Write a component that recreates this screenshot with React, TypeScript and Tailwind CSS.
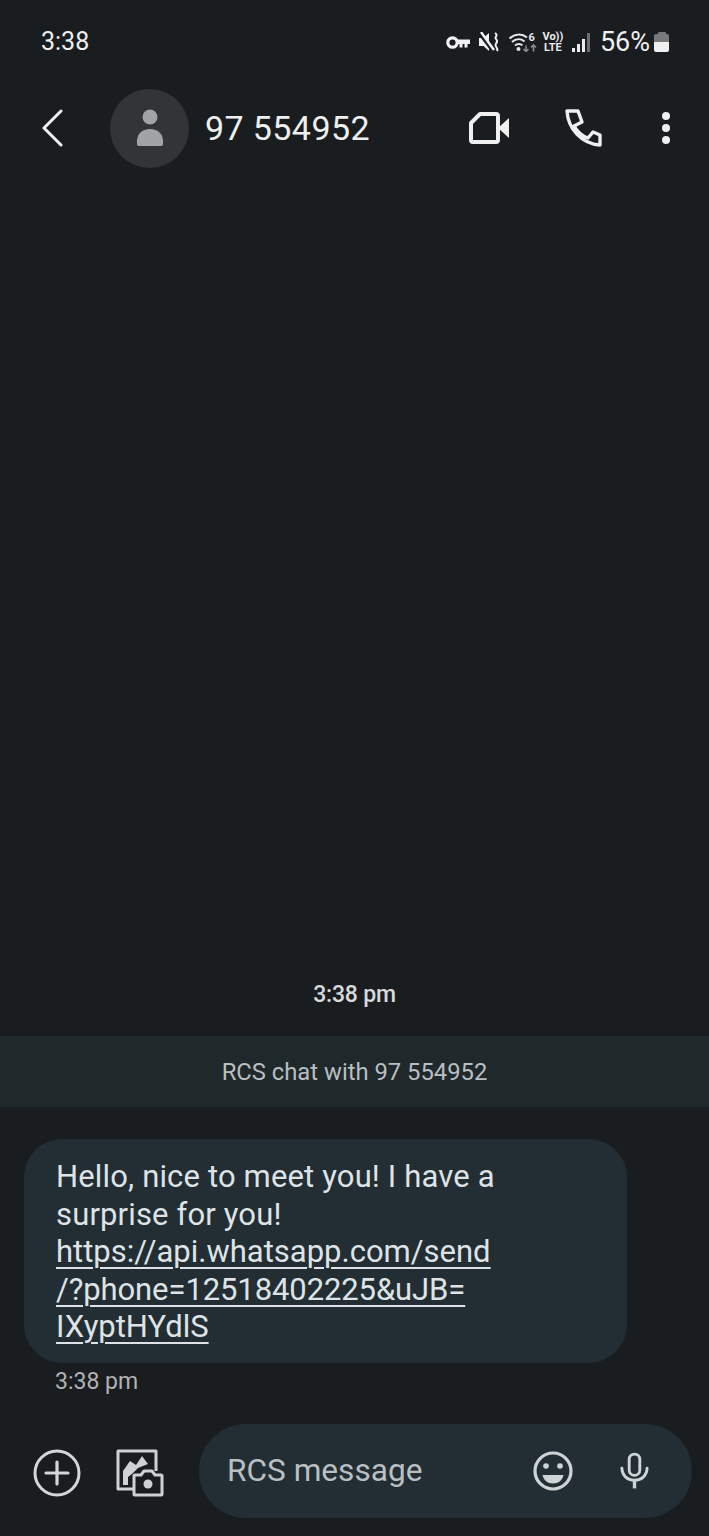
const font = { fontFamily: "Roboto, 'Noto Sans', sans-serif" };

function Key() {
  return (
    <svg width="24" height="13" viewBox="0 0 24 13" fill="none">
      <circle cx="6.5" cy="6.5" r="4.7" stroke="#f2f2f2" strokeWidth="3.2" />
      <path d="M10 3.500h14v4.500h-2.500v3.500h-3V8h-2v3.500h-3V8H10z" fill="#f2f2f2" />
    </svg>
  );
}

function Mute() {
  return (
    <svg width="22" height="20" viewBox="0 0 22 20" fill="none">
      <path d="M0 6h4.500L10 1v18l-5.500-5H0z" fill="#f2f2f2" />
      <path d="M0 1l13 17" stroke="#1a1d20" strokeWidth="3" />
      <path d="M2 0l13 18" stroke="#f2f2f2" strokeWidth="2.400" />
      <path d="M16 1c3 2 1 3 .5 4.500s2.500 2.500 1.500 4.500-2.500 2.500-1 4.500 2 3 1 4.500" stroke="#f2f2f2" strokeWidth="2" />
    </svg>
  );
}

function Wifi() {
  return (
    <svg width="28" height="20" viewBox="0 0 28 20" fill="none">
      <path d="M0.500 6.500C6 1.500 13 1.500 18 5.500M3 10c4-3.500 9-3.500 12.500-.5M6 13.500c2.500-2 5-2 7.500-.2" stroke="#e8e8e8" strokeWidth="2" />
      <circle cx="9.500" cy="17" r="2" fill="#e8e8e8" />
      <path d="M17 13.500v6m-2.500-2.500l2.500 2.500 2.500-2.500" stroke="#8a8a8a" strokeWidth="1.600" />
      <path d="M24.500 19.500v-6.500m-2.500 2.500l2.500-2.500 2.500 2.500" stroke="#8a8a8a" strokeWidth="1.600" />
      <text x="19.500" y="9" fontSize="11" fontWeight="700" fill="#e8e8e8" style={font}>6</text>
    </svg>
  );
}

function Signal() {
  return (
    <div className="flex h-[19px] items-end gap-[2px]">
      <div className="h-[4px] w-[3px] bg-[#ececec]" />
      <div className="h-[8px] w-[3px] bg-[#ececec]" />
      <div className="h-[13px] w-[3px] bg-[#ececec]" />
      <div className="h-[19px] w-[3px] bg-[#6b6e70]" />
    </div>
  );
}

function Battery() {
  return (
    <div className="flex w-[15px] flex-col items-center">
      <div className="h-[2px] w-[8px] rounded-t-[1px] bg-[#77797b]" />
      <div className="flex h-[18px] w-[15px] flex-col overflow-hidden rounded-[2px]">
        <div className="h-[8px] bg-[#77797b]" />
        <div className="flex-1 bg-[#efefef]" />
      </div>
    </div>
  );
}

function Back() {
  return (
    <svg width="24" height="38" viewBox="0 0 24 38" fill="none">
      <path d="M20 2L3 19l17 17" stroke="#f1f1f1" strokeWidth="3" strokeLinecap="round" strokeLinejoin="round" />
    </svg>
  );
}

function Video() {
  return (
    <svg width="42" height="34" viewBox="0 0 42 34" fill="none">
      <path d="M12 3h16a2 2 0 0 1 2 2v24a2 2 0 0 1-2 2H5a2 2 0 0 1-2-2V12z" stroke="#efefef" strokeWidth="4" strokeLinejoin="round" />
      <path d="M30 17l11-10v20z" fill="#efefef" />
    </svg>
  );
}

function Phone() {
  return (
    <svg width="38" height="40" viewBox="0 0 38 40" fill="none">
      <path d="M3 3h11l4 11-8 4c3 5 8 10 14 12l5-6 7 3v10C18 36 4 21 3 3z" stroke="#efefef" strokeWidth="3.400" strokeLinejoin="round" />
    </svg>
  );
}

function Plus() {
  return (
    <svg width="48" height="48" viewBox="0 0 48 48" fill="none">
      <circle cx="24" cy="24" r="22" stroke="#d4d6d7" strokeWidth="3" />
      <path d="M24 13v22M13 24h22" stroke="#d4d6d7" strokeWidth="3.200" strokeLinecap="round" />
    </svg>
  );
}

function Gallery() {
  return (
    <svg width="48" height="48" viewBox="0 0 48 48" fill="none">
      <path d="M17 40H2V2h38v20" stroke="#cfd1d2" strokeWidth="3" strokeLinejoin="round" />
      <path d="M7 36V22l7-10 6 4 6-9 6 8-10 4-6 6-4 3v8z" fill="#cfd1d2" />
      <path d="M19 46a1 1 0 0 1-1-1V27a1 1 0 0 1 1-1h6l3-4h8l3 4h6a1 1 0 0 1 1 1v18a1 1 0 0 1-1 1z" fill="#1a1d20" stroke="#cfd1d2" strokeWidth="3" strokeLinejoin="round" />
      <circle cx="32" cy="35" r="4.500" fill="#cfd1d2" />
    </svg>
  );
}

function Smile() {
  return (
    <svg width="40" height="40" viewBox="0 0 40 40" fill="none">
      <circle cx="20" cy="20" r="18" stroke="#ced3d5" strokeWidth="3.200" />
      <circle cx="13" cy="15" r="2.800" fill="#ced3d5" />
      <circle cx="27" cy="15" r="2.800" fill="#ced3d5" />
      <path d="M9.500 24h21c-1 5-5 8.500-10.500 8.500S10.500 29 9.500 24z" fill="#ced3d5" />
    </svg>
  );
}

function Mic() {
  return (
    <svg width="29" height="38" viewBox="0 0 30 38" fill="none">
      <rect x="9.500" y="1.500" width="11" height="22" rx="5.500" stroke="#ced3d5" strokeWidth="3" />
      <path d="M2 16c0 7.500 5.500 12.500 13 12.500S28 23.500 28 16" stroke="#ced3d5" strokeWidth="3" strokeLinecap="round" />
      <path d="M15 28v9" stroke="#ced3d5" strokeWidth="3.500" />
    </svg>
  );
}

export default function App() {
  return (
    <div style={font} className="flex h-[1536px] w-[709px] flex-col overflow-hidden bg-[#1a1d20]">
      <div className="mt-[22px] flex h-[40px] items-center justify-between pl-[41px] pr-[40px]">
        <span className="text-[25px] text-[#efefef]">3:38</span>
        <div className="flex items-center">
          <Key />
          <div className="ml-[9px]"><Mute /></div>
          <div className="ml-[8px]"><Wifi /></div>
          <div className="ml-[6px] flex w-[20px] flex-col items-center text-[11px] font-bold leading-[11px] text-[#ececec]">
            <span>Vo))</span>
            <span>LTE</span>
          </div>
          <div className="ml-[9px]"><Signal /></div>
          <span className="ml-[10px] text-[27px] text-[#efefef]">56%</span>
          <div className="ml-[4px]"><Battery /></div>
        </div>
      </div>

      <div className="mt-[27px] flex h-[78px] items-center">
        <div className="ml-[41px]"><Back /></div>
        <div className="relative ml-[45px] flex h-[79px] w-[79px] items-center justify-center rounded-full bg-[#323436]">
          <svg width="28" height="38" viewBox="0 0 28 38" fill="#a2a3a4">
            <circle cx="14" cy="8" r="7.500" />
            <path d="M1 35c-1-10 5-15 13-15s14 5 13 15c-.2 1.500-1 2-2 2H3c-1 0-1.800-.5-2-2z" />
          </svg>
        </div>
        <span className="ml-[16px] text-[34px] tracking-[0.4px] text-[#efefef]">97 554952</span>
        <div className="ml-[98px]"><Video /></div>
        <div className="ml-[54px]"><Phone /></div>
        <div className="ml-[60px] flex flex-col gap-[4px]">
          <div className="h-[8px] w-[8px] rounded-full bg-[#efefef]" />
          <div className="h-[8px] w-[8px] rounded-full bg-[#efefef]" />
          <div className="h-[8px] w-[8px] rounded-full bg-[#efefef]" />
        </div>
      </div>

      <div className="flex-1" />

      <div className="mb-[24px] text-center text-[23px] font-medium tracking-[-0.2px] text-[#d8d9da]">3:38 pm</div>
      <div className="flex h-[71px] items-center justify-center bg-[#1f282b] pt-[2px] text-[23.800px] text-[#b9bec0]">RCS chat with 97 554952</div>

      <div className="ml-[24px] mt-[32px] w-[603px] rounded-[38px] bg-[#222e34] pb-[17px] pl-[32px] pt-[19px] text-[31px] leading-[37.400px] text-[#dfe3e5]">
        <div className="tracking-[0.15px]">Hello, nice to meet you! I have a</div>
        <div className="tracking-[0.15px]">surprise for you!</div>
        <div className="underline decoration-[1.500px] underline-offset-[5px]">https://api.whatsapp.com/send</div>
        <div className="tracking-[-0.1px] underline decoration-[1.500px] underline-offset-[5px]">/?phone=12518402225&amp;uJB=</div>
        <div className="underline decoration-[1.500px] underline-offset-[5px]">IXyptHYdlS</div>
      </div>
      <div className="ml-[55px] mt-[2px] text-[23px] text-[#b0b3b5]">3:38 pm</div>

      <div className="mb-[18px] mt-[25px] flex items-center">
        <div className="ml-[33px] pt-[3px]"><Plus /></div>
        <div className="ml-[35px] pt-[3px]"><Gallery /></div>
        <div className="ml-[35px] flex h-[94px] w-[493px] items-center rounded-[47px] bg-[#222e34] pl-[28px]">
          <span className="text-[31.600px] text-[#b9bfc2]">RCS message</span>
          <div className="ml-[111px]"><Smile /></div>
          <div className="ml-[47px]"><Mic /></div>
        </div>
      </div>
    </div>
  );
}
